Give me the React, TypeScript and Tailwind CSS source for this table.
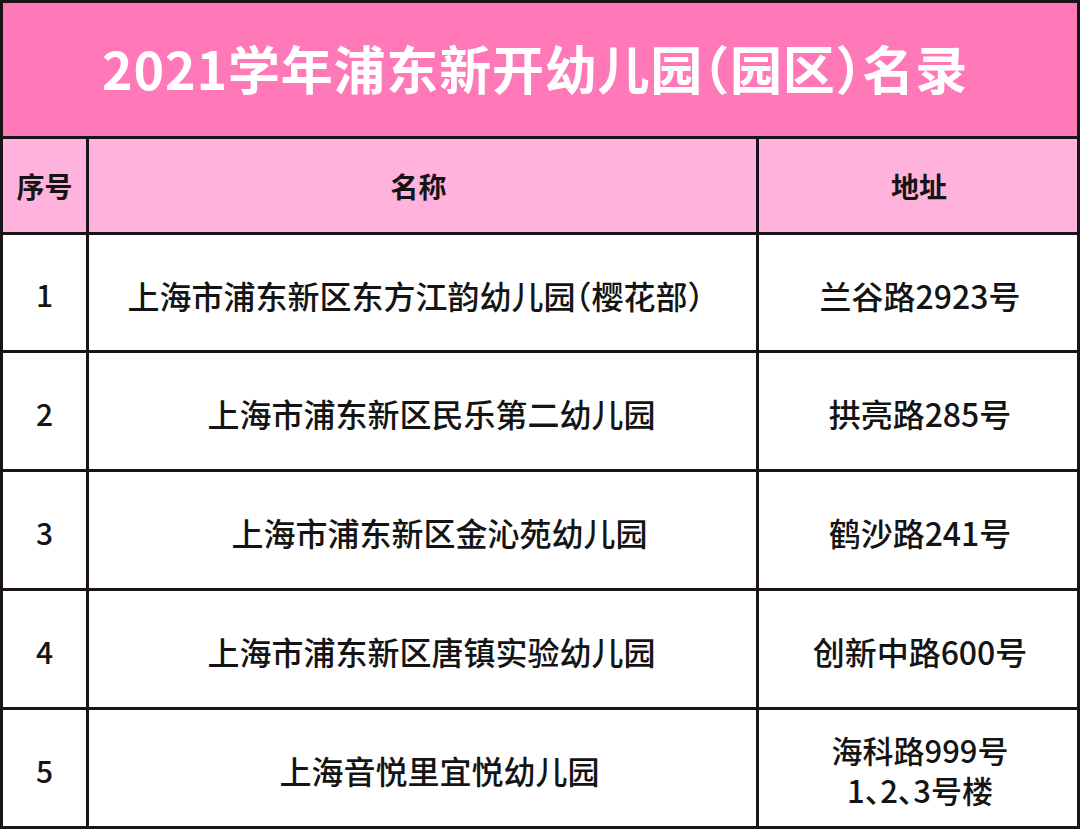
import React from "react";

const rows = [
  { n: "1", name: "上海市浦东新区东方江韵幼儿园（樱花部）", pad: "pr-[14px]", addr: ["兰谷路2923号"] },
  { n: "2", name: "上海市浦东新区民乐第二幼儿园", pad: "pl-[18px]", addr: ["拱亮路285号"] },
  { n: "3", name: "上海市浦东新区金沁苑幼儿园", pad: "pl-[34px]", addr: ["鹤沙路241号"] },
  { n: "4", name: "上海市浦东新区唐镇实验幼儿园", pad: "pl-[18px]", addr: ["创新中路600号"] },
  { n: "5", name: "上海音悦里宜悦幼儿园", pad: "pl-[34px]", addr: ["海科路999号", "1、2、3号楼"] },
];

export default function App() {
  return (
    <div
      className="w-[1080px] h-[829px] bg-[#1a1418] p-[3px] grid grid-cols-[83px_667px_318px] grid-rows-[133px_93px_115px_116px_116px_116px_116px] gap-[3px] text-[#141414] [font-feature-settings:'halt']"
      style={{ fontFamily: '"Noto Sans CJK SC", "Noto Sans", sans-serif' }}
    >
      <div className="col-span-3 bg-[#ff78b7] flex items-center justify-center pr-[10px] pb-[3px]">
        <span className="text-white text-[52px] font-bold leading-none tracking-[0.8px]">
          2021学年浦东新开幼儿园（园区）名录
        </span>
      </div>

      <div className="bg-[#ffb2dc] flex items-center justify-center text-[28px] font-bold">序号</div>
      <div className="bg-[#ffb2dc] flex items-center justify-center pr-[8px] text-[28px] font-bold">名称</div>
      <div className="bg-[#ffb2dc] flex items-center justify-center pl-[2px] text-[28px] font-bold">地址</div>

      {rows.map((r) => (
        <React.Fragment key={r.n}>
          <div className="bg-white flex items-center justify-center text-[30px] font-medium pt-[4px]">{r.n}</div>
          <div className={`bg-white flex items-center justify-center text-[32px] font-medium pt-[4px] ${r.pad}`}>
            <span className="whitespace-nowrap">{r.name}</span>
          </div>
          <div
            className={`bg-white flex flex-col items-center justify-center font-medium pl-[4px] pt-[4px] ${
              r.addr.length > 1 ? "text-[31px] leading-[40px]" : "text-[32px] leading-[38px]"
            }`}
          >
            {r.addr.map((a) => (
              <div key={a} className="whitespace-nowrap">{a}</div>
            ))}
          </div>
        </React.Fragment>
      ))}
    </div>
  );
}
